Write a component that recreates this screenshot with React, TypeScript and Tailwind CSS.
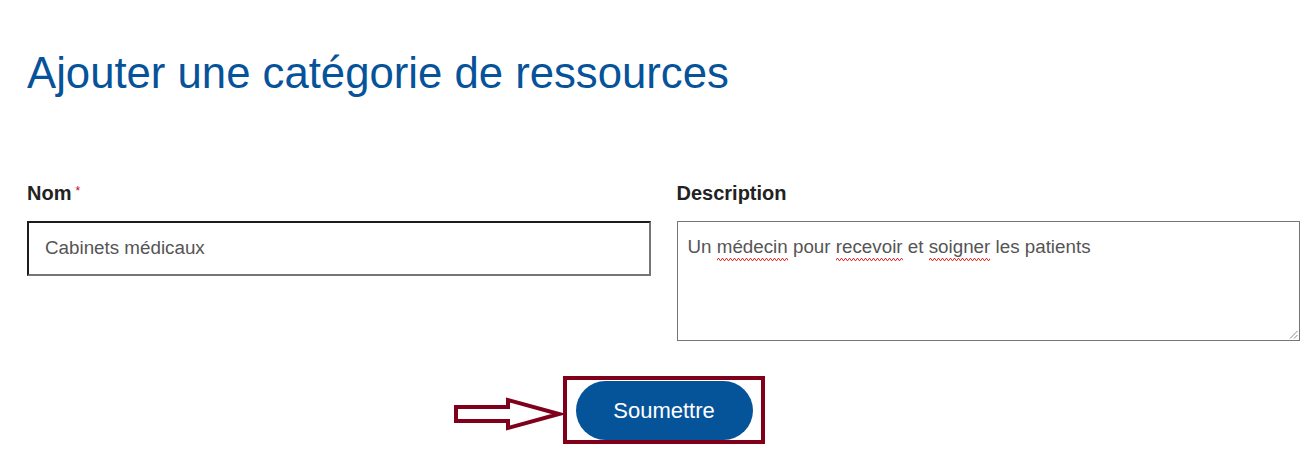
import React from "react";

function Spell({ children, id }: { children: React.ReactNode; id: string }) {
  return (
    <span className="relative inline-block">
      {children}
      <svg
        className="absolute left-0 bottom-[-3px] w-full h-[3px]"
        preserveAspectRatio="none"
      >
        <defs>
          <pattern id={id} width="4" height="3" patternUnits="userSpaceOnUse">
            <path d="M0 2.5 L1 0.5 L2 0.5 L3 2.5 L4 2.5" stroke="#e02c2c" strokeWidth="1" fill="none" />
          </pattern>
        </defs>
        <rect width="100%" height="3" fill={`url(#${id})`} />
      </svg>
    </span>
  );
}

export default function App() {
  return (
    <div
      className="w-[1306px] h-[451px] bg-white overflow-hidden pl-[27px] pr-[6px] pt-[48px]"
      style={{ fontFamily: '"Liberation Sans", Arial, sans-serif' }}
    >
      <h1 className="text-[43.7px] leading-[50px] text-[#07539a] font-normal">
        Ajouter une catégorie de ressources
      </h1>

      <div className="grid grid-cols-2 gap-x-[26px] mt-[83px]">
        <div className="flex flex-col">
          <div className="h-[24px] text-[20px] leading-[24px] font-bold text-[#222] flex items-start">
            Nom
            <span className="text-[#c0001a] text-[12px] leading-[14px] font-normal ml-[4px] mt-[3px]">*</span>
          </div>
          <div className="mt-[16px] h-[55px] border-2 border-t-[#1c1c1c] border-l-[#1c1c1c] border-r-[#767676] border-b-[#767676] flex items-center pl-[16px] text-[18.8px] text-[#555]">
            Cabinets médicaux
          </div>
        </div>
        <div className="flex flex-col">
          <div className="h-[24px] text-[20px] leading-[24px] font-bold text-[#222]">
            Description
          </div>
          <div className="relative mt-[16px] h-[120px] border border-[#767676] px-[10px] pt-[14px] text-[18.8px] leading-[22px] text-[#555]">
            Un <Spell id="w1">médecin</Spell> pour <Spell id="w2">recevoir</Spell> et{" "}
            <Spell id="w3">soigner</Spell> les patients
            <svg
              className="absolute right-[1px] bottom-[1px]"
              width="9"
              height="9"
              viewBox="0 0 9 9"
            >
              <line x1="8.5" y1="1" x2="1" y2="8.5" stroke="#8a8a8a" strokeWidth="1" />
              <line x1="8.5" y1="5" x2="5" y2="8.5" stroke="#8a8a8a" strokeWidth="1" />
            </svg>
          </div>
        </div>
      </div>

      <div className="flex justify-center mt-[35px]">
        <div className="relative">
          <svg
            className="absolute right-full top-[20px]"
            width="110"
            height="36"
            viewBox="0 0 110 36"
          >
            <polygon
              points="3,11 55,11 55,4 106,18 55,32 55,25 3,25"
              fill="white"
              stroke="#80001c"
              strokeWidth="4"
              strokeLinejoin="miter"
            />
          </svg>
          <div className="border-[4px] border-[#80001c] pl-[9px] pr-[8px] pt-[1px] pb-0 w-[202px] h-[68px]">
            <button className="w-[177px] h-[59px] rounded-full bg-[#05549a] text-white text-[22px]">
              Soumettre
            </button>
          </div>
        </div>
      </div>
    </div>
  );
}
